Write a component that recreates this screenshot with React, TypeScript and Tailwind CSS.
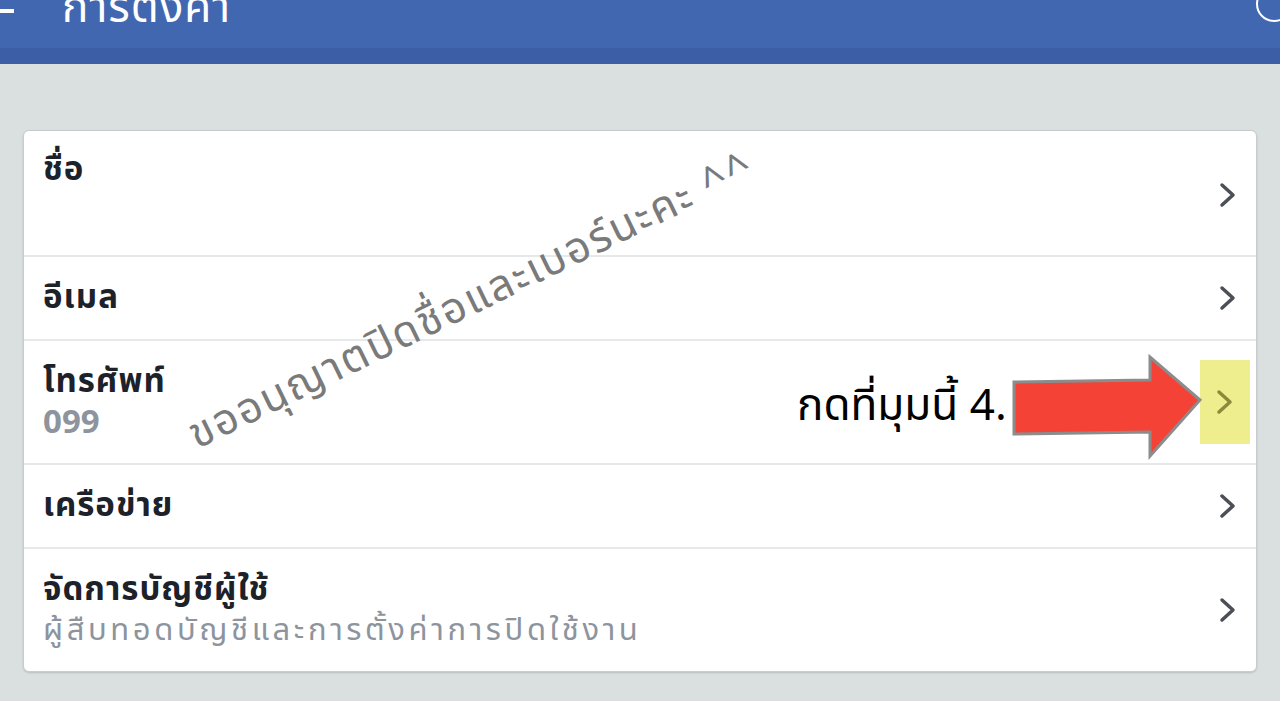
interface SettingRow {
  id: string;
  title: string;
  sub?: string;
  subTone?: 'number' | 'text';
  height: string;
  highlight?: boolean;
}

const rows: SettingRow[] = [
  { id: 'name', title: 'ชื่อ', height: 'h-[124px]' },
  { id: 'email', title: 'อีเมล', height: 'h-[84px]' },
  { id: 'phone', title: 'โทรศัพท์', sub: '099', subTone: 'number', height: 'h-[124px]', highlight: true },
  { id: 'network', title: 'เครือข่าย', height: 'h-[84px]' },
  {
    id: 'account',
    title: 'จัดการบัญชีผู้ใช้',
    sub: 'ผู้สืบทอดบัญชีและการตั้งค่าการปิดใช้งาน',
    subTone: 'text',
    height: 'h-[124px]',
  },
];

const thai = "font-['Noto_Sans_Thai','Noto_Sans','DejaVu_Sans',sans-serif]";

function Chevron({ olive }: { olive?: boolean }) {
  return (
    <svg width="20" height="28" viewBox="0 0 20 28" className="shrink-0">
      <path
        d="M4 4 L15 14 L4 24"
        fill="none"
        stroke={olive ? '#8a8a3a' : '#4b4f56'}
        strokeWidth="3.5"
        strokeLinecap="round"
        strokeLinejoin="round"
      />
    </svg>
  );
}

export default function App() {
  return (
    <div className={`relative w-[1280px] h-[701px] overflow-hidden bg-[#dadfe0] ${thai}`}>
      {/* Header */}
      <div className="h-[48px] bg-[#4267b1] flex items-start overflow-hidden relative">
        <div className="w-[14px] h-[4px] bg-white mt-[9px] shrink-0" />
        <h1 className="ml-[48px] -mt-[21px] text-[44px] leading-[60px] text-white font-normal tracking-[1px]">การตั้งค่า</h1>
        <div className="absolute -right-[12px] -top-[14px] w-[36px] h-[36px] rounded-full border-2 border-white" />
      </div>
      <div className="h-[16px] bg-[#3c5ea7]" />

      {/* Card */}
      <div className="mt-[66px] mx-[23px] bg-white rounded-[6px] border border-[#c8cccf] shadow-[0_1px_2px_rgba(0,0,0,0.15)] overflow-hidden">
        {rows.map((row, i) => (
          <div
            key={row.id}
            className={`${row.height} flex items-center pl-[19px] pr-[18px] ${i > 0 ? 'border-t-2 border-[#e6e8ea]' : ''} ${
              row.id === 'name' ? 'items-start pt-[18px]' : ''
            }`}
          >
            <div className="flex-1 flex flex-col">
              <span className="text-[33px] leading-[42px] font-bold text-[#1d2129] tracking-[1px]">{row.title}</span>
              {row.sub && (
                <span
                  className={`leading-[40px] text-[#8d949e] ${
                    row.subTone === 'number' ? 'text-[33px] font-bold' : 'text-[31px] font-normal tracking-[3.6px]'
                  }`}
                >
                  {row.sub}
                </span>
              )}
            </div>
            {row.highlight ? (
              <div className="w-[50px] h-[84px] bg-[#efee8f] flex items-center justify-center -mr-[12px]">
                <Chevron olive />
              </div>
            ) : (
              <div className={row.id === 'name' ? 'mt-[32px]' : ''}>
                <Chevron />
              </div>
            )}
          </div>
        ))}
      </div>

      {/* Annotation */}
      <div className="absolute left-[797px] top-[380px] text-[44px] leading-[54px] text-black font-normal">กดที่มุมนี้ 4.</div>
      <svg className="absolute left-[1010px] top-[354px]" width="194" height="106" viewBox="0 0 194 106">
        <path
          d="M4 28 L140 26 L140 3 L190 46 L140 102 L140 78 L4 80 Z"
          fill="#f44336"
          stroke="#8c8c8c"
          strokeWidth="3"
          strokeLinejoin="miter"
        />
      </svg>

      {/* Watermark */}
      <div className="absolute left-[160px] top-[276px] origin-center -rotate-[26deg] text-[43px] leading-[50px] text-[#7a7a7a] whitespace-nowrap tracking-[2px]">
        ขออนุญาตปิดชื่อและเบอร์นะคะ ^^
      </div>
    </div>
  );
}
